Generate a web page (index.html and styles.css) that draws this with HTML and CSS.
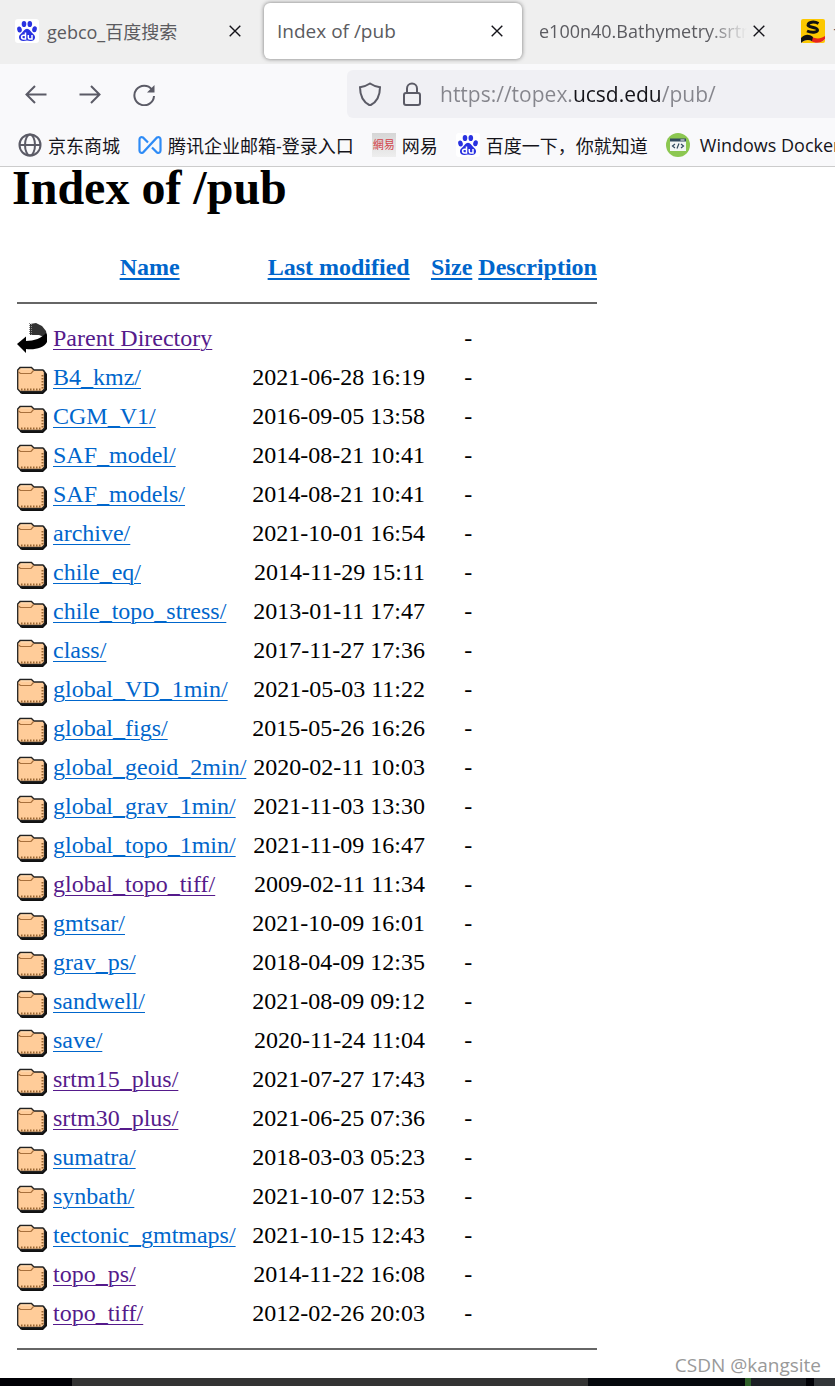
FILE: index.html
```html
<!DOCTYPE html>
<html lang="en">

<head>
    <meta charset="UTF-8">
    <meta name="viewport" content="width=device-width, initial-scale=1.0">
    <title>Index of /pub</title>
    <link rel="stylesheet" href="styles.css">
</head>

<body>
    <!-- shared icons -->
    <svg class="sprite" aria-hidden="true">
        <symbol id="folder" viewBox="0 0 30 33">
            <path d="M3 30 V32 L5 33 H26 L30 29 V13 L27 9z" fill="#111"/>
            <path d="M.7 9 L3 6.500 H14.500 L17 9 H26 L27.500 11 V28 L25 30.500 H3 L.7 28z" fill="#ffcc99" stroke="#222" stroke-width="1.300"/>
            <path d="M1.500 11 L3.500 12.500 H14 L16.500 9.500" fill="none" stroke="#a8703c" stroke-width="1.200"/>
            <path d="M4 8 H14" fill="none" stroke="#ffe0bd"/>
            <path d="M4 28.500 H25" stroke="#9a6633" stroke-width="2" stroke-dasharray="1.500 1.500"/>
            <path d="M25.500 14 V28" stroke="#9a6633" stroke-width="2" stroke-dasharray="1.500 1.500"/>
        </symbol>
        <symbol id="back" viewBox="0 0 30 33">
            <path d="M13 2 L19 1 L25 4 L29 9 L30 14 L27 15 L22 13 L13 13z" fill="#333"/>
            <path d="M12.500 1 V13 M14.500 2 V13" stroke="#888" stroke-dasharray="1 1"/>
            <path d="M0 22 L9 14.500 V19 C17 19 25 16 29 11 L30 13 V20 C27 26 18 28 9 27 V31z" fill="#000"/>
        </symbol>
        <symbol id="baidu" viewBox="0 0 24 24">
            <rect width="24" height="24" rx="3" fill="#fff"/>
            <g fill="#2932e1">
                <ellipse cx="4.500" cy="10.500" rx="2.300" ry="3" transform="rotate(-12 4.500 10.500)"/>
                <ellipse cx="9" cy="5" rx="2.300" ry="3.100"/>
                <ellipse cx="14.800" cy="5" rx="2.300" ry="3.100"/>
                <ellipse cx="19.500" cy="10.300" rx="2.300" ry="3" transform="rotate(12 19.500 10.300)"/>
                <path d="M12 9.800c2.500 0 3.500 2.500 5 4 1.700 1.600 3.300 2.800 3 5-.3 2.500-2.300 3.300-4.500 3.200-1.300-.2-2.300-.4-3.500-.4s-2.200.2-3.500.4c-2.200.1-4.200-.7-4.500-3.200-.3-2.200 1.300-3.400 3-5 1.500-1.500 2.500-4 5-4z"/>
            </g>
            <path d="M10.500 13.500v6.500h-2a1.900 1.900 0 0 1 0-3.800h2M13.300 16v2.500c0 1 .5 1.500 1.400 1.500h2.300v-4" fill="none" stroke="#fff" stroke-width="1.500"/>
        </symbol>
        <symbol id="close" viewBox="0 0 12 12">
            <path d="M.7.7l10.600 10.600M11.300.7L.7 11.300" fill="none" stroke="#15141a" stroke-width="1.400"/>
        </symbol>
    </svg>

    <header class="browser">
        <div class="tabs">
            <div class="tab">
                <svg class="favicon"><use href="#baidu"/></svg>
                <span class="tab-title">gebco_百度搜索</span>
                <button class="tab-close" aria-label="Close tab"><svg><use href="#close"/></svg></button>
            </div>
            <div class="tab active">
                <span class="tab-title">Index of /pub</span>
                <button class="tab-close" aria-label="Close tab"><svg><use href="#close"/></svg></button>
            </div>
            <div class="tab">
                <span class="tab-title fade">e100n40.Bathymetry.srtm</span>
                <button class="tab-close" aria-label="Close tab"><svg><use href="#close"/></svg></button>
            </div>
            <div class="tab">
                <svg class="favicon" viewBox="0 0 24 24">
                    <rect width="24" height="24" rx="2" fill="#fcc800"/>
                    <path d="M0 24v-4h24c-3 4-9 5-13 2-4-2-8-1-11 2z" fill="#efefef"/>
                    <path d="M11 18c4 2 9 2 13-1v3c-3 4-9 5-14 2z" fill="#e8261c"/>
                    <path d="M0 24v-5c4-4 8-4 12-1l-1 4c-4-2-8-1-11 2z" fill="#111"/>
                    <path d="M17.500 4.500C13 2 7.500 3 7 6c-.5 2.500 9.500 2 9.500 5 0 2.600-6 3-10.500 1" fill="none" stroke="#111" stroke-width="3"/>
                </svg>
                <span class="tab-title">专业</span>
            </div>
        </div>

        <div class="toolbar">
            <button class="nav-button" aria-label="Back">
                <svg viewBox="0 0 24 24"><path d="M22.500 12.500H3M11 4l-8.500 8.500L11 21"/></svg>
            </button>
            <button class="nav-button" aria-label="Forward">
                <svg viewBox="0 0 24 24"><path d="M1.500 12.500H21M13 4l8.500 8.500L13 21"/></svg>
            </button>
            <button class="nav-button" aria-label="Reload">
                <svg viewBox="0 0 24 24"><path d="M20 7.500A9.800 9.800 0 1 0 22 14"/><path class="solid" d="M22.500 3v7.500H15z"/></svg>
            </button>
            <div class="url-bar">
                <svg class="url-icon" viewBox="0 0 24 24"><path d="M12 1.500c3 2 6 3.200 10 3.700 0 9-2.500 14.500-10 18.300C4.500 19.700 2 14.200 2 5.200c4-.5 7-1.700 10-3.700z"/></svg>
                <svg class="url-icon" viewBox="0 0 24 24"><rect x="4" y="11" width="16" height="12" rx="2"/><path d="M7 11V6.500a5 5 0 0 1 10 0V11"/></svg>
                <input class="url-input" type="text" aria-label="Address" value="https://topex.ucsd.edu/pub/">
            </div>
        </div>

        <nav class="bookmarks">
            <a class="bookmark" href="#">
                <svg class="favicon globe" viewBox="0 0 24 24"><circle cx="12" cy="12" r="10.500"/><ellipse cx="12" cy="12" rx="5" ry="10.500"/><path d="M1.500 12h21"/></svg>
                京东商城
            </a>
            <a class="bookmark" href="#">
                <svg class="favicon" viewBox="0 0 24 24"><path d="M14 14.500l5 5c2 1 3.500 0 3.500-2v-11c0-2-1.500-3-3.500-2L5 19.500c-2 1-3.500 0-3.500-2v-11c0-2 1.500-3 3.500-2l5 5" fill="none" stroke="#2e8bf6" stroke-width="2.200"/></svg>
                腾讯企业邮箱-登录入口
            </a>
            <a class="bookmark" href="#">
                <span class="netease">網易</span>
                网易
            </a>
            <a class="bookmark" href="#">
                <svg class="favicon"><use href="#baidu"/></svg>
                百度一下，你就知道
            </a>
            <a class="bookmark docker" href="#">
                <svg class="favicon" viewBox="0 0 24 24">
                    <circle cx="12" cy="12" r="12" fill="#8cc751"/>
                    <path d="M4 6h16v12H4z" fill="#f2f5f5"/>
                    <path d="M4 5.500h16v3H4z" fill="#324a5e"/>
                    <path d="M14.500 7h4" stroke="#fff"/>
                    <path d="M9 11l-2.500 2L9 15M15 11l2.500 2-2.500 2M13 10.500l-2 5" fill="none" stroke="#324a5e" stroke-width="1.200"/>
                </svg>
                Windows Docker
            </a>
        </nav>
    </header>

    <main>
        <h1>Index of /pub</h1>
        <table>
            <tr><th><span class="icon"></span></th><th><a href="#">Name</a></th><th><a href="#">Last modified</a></th><th><a href="#">Size</a></th><th><a href="#">Description</a></th></tr>
            <tr><td colspan="5"><hr></td></tr>
            <tr><td><svg class="icon"><use href="#back"/></svg></td><td><a class="visited" href="#">Parent Directory</a></td><td></td><td>-</td><td></td></tr>
            <tr><td><svg class="icon"><use href="#folder"/></svg></td><td><a href="#">B4_kmz/</a></td><td>2021-06-28 16:19</td><td>-</td><td></td></tr>
            <tr><td><svg class="icon"><use href="#folder"/></svg></td><td><a href="#">CGM_V1/</a></td><td>2016-09-05 13:58</td><td>-</td><td></td></tr>
            <tr><td><svg class="icon"><use href="#folder"/></svg></td><td><a href="#">SAF_model/</a></td><td>2014-08-21 10:41</td><td>-</td><td></td></tr>
            <tr><td><svg class="icon"><use href="#folder"/></svg></td><td><a href="#">SAF_models/</a></td><td>2014-08-21 10:41</td><td>-</td><td></td></tr>
            <tr><td><svg class="icon"><use href="#folder"/></svg></td><td><a href="#">archive/</a></td><td>2021-10-01 16:54</td><td>-</td><td></td></tr>
            <tr><td><svg class="icon"><use href="#folder"/></svg></td><td><a href="#">chile_eq/</a></td><td>2014-11-29 15:11</td><td>-</td><td></td></tr>
            <tr><td><svg class="icon"><use href="#folder"/></svg></td><td><a href="#">chile_topo_stress/</a></td><td>2013-01-11 17:47</td><td>-</td><td></td></tr>
            <tr><td><svg class="icon"><use href="#folder"/></svg></td><td><a href="#">class/</a></td><td>2017-11-27 17:36</td><td>-</td><td></td></tr>
            <tr><td><svg class="icon"><use href="#folder"/></svg></td><td><a href="#">global_VD_1min/</a></td><td>2021-05-03 11:22</td><td>-</td><td></td></tr>
            <tr><td><svg class="icon"><use href="#folder"/></svg></td><td><a href="#">global_figs/</a></td><td>2015-05-26 16:26</td><td>-</td><td></td></tr>
            <tr><td><svg class="icon"><use href="#folder"/></svg></td><td><a href="#">global_geoid_2min/</a></td><td>2020-02-11 10:03</td><td>-</td><td></td></tr>
            <tr><td><svg class="icon"><use href="#folder"/></svg></td><td><a href="#">global_grav_1min/</a></td><td>2021-11-03 13:30</td><td>-</td><td></td></tr>
            <tr><td><svg class="icon"><use href="#folder"/></svg></td><td><a href="#">global_topo_1min/</a></td><td>2021-11-09 16:47</td><td>-</td><td></td></tr>
            <tr><td><svg class="icon"><use href="#folder"/></svg></td><td><a class="visited" href="#">global_topo_tiff/</a></td><td>2009-02-11 11:34</td><td>-</td><td></td></tr>
            <tr><td><svg class="icon"><use href="#folder"/></svg></td><td><a href="#">gmtsar/</a></td><td>2021-10-09 16:01</td><td>-</td><td></td></tr>
            <tr><td><svg class="icon"><use href="#folder"/></svg></td><td><a href="#">grav_ps/</a></td><td>2018-04-09 12:35</td><td>-</td><td></td></tr>
            <tr><td><svg class="icon"><use href="#folder"/></svg></td><td><a href="#">sandwell/</a></td><td>2021-08-09 09:12</td><td>-</td><td></td></tr>
            <tr><td><svg class="icon"><use href="#folder"/></svg></td><td><a href="#">save/</a></td><td>2020-11-24 11:04</td><td>-</td><td></td></tr>
            <tr><td><svg class="icon"><use href="#folder"/></svg></td><td><a class="visited" href="#">srtm15_plus/</a></td><td>2021-07-27 17:43</td><td>-</td><td></td></tr>
            <tr><td><svg class="icon"><use href="#folder"/></svg></td><td><a class="visited" href="#">srtm30_plus/</a></td><td>2021-06-25 07:36</td><td>-</td><td></td></tr>
            <tr><td><svg class="icon"><use href="#folder"/></svg></td><td><a href="#">sumatra/</a></td><td>2018-03-03 05:23</td><td>-</td><td></td></tr>
            <tr><td><svg class="icon"><use href="#folder"/></svg></td><td><a href="#">synbath/</a></td><td>2021-10-07 12:53</td><td>-</td><td></td></tr>
            <tr><td><svg class="icon"><use href="#folder"/></svg></td><td><a href="#">tectonic_gmtmaps/</a></td><td>2021-10-15 12:43</td><td>-</td><td></td></tr>
            <tr><td><svg class="icon"><use href="#folder"/></svg></td><td><a class="visited" href="#">topo_ps/</a></td><td>2014-11-22 16:08</td><td>-</td><td></td></tr>
            <tr><td><svg class="icon"><use href="#folder"/></svg></td><td><a class="visited" href="#">topo_tiff/</a></td><td>2012-02-26 20:03</td><td>-</td><td></td></tr>
            <tr><td colspan="5"><hr></td></tr>
        </table>
        <div class="watermark">CSDN @kangsite</div>
    </main>

    <footer class="taskbar">
        <span class="start"></span>
        <span class="search"></span>
        <span class="apps"></span>
        <span class="green"></span>
        <span class="tray"></span>
        <span class="gap"></span>
        <span class="end"></span>
    </footer>
</body>

</html>
```

FILE: styles.css
```css
* {
    box-sizing: border-box;
}

body {
    margin: 0;
    background: #fff;
    color: #000;
    font-family: 'Liberation Serif', 'Times New Roman', serif;
    font-size: 24px;
    overflow-x: hidden;
}

button {
    padding: 0;
    border: none;
    background: none;
}

.sprite {
    position: absolute;
    width: 0;
    height: 0;
}

/* browser chrome */
.browser {
    font-family: 'Open Sans', 'Noto Sans CJK SC', sans-serif;
    font-size: 18px;
    background: #f9f9fb;
    border-bottom: 1px solid #ccc;
    overflow: hidden;
}

.favicon {
    width: 24px;
    height: 24px;
    flex: none;
}

.tabs {
    display: flex;
    gap: 4px;
    height: 64px;
    padding: 3px 2px 5px;
    background: #efefef;
}

.tab {
    display: flex;
    align-items: center;
    flex: none;
    width: 258px;
    padding: 0 13px;
    color: #5b5b60;
    border-radius: 6px;
}

.tab.active {
    background: #fff;
    box-shadow: 0 0 4px rgba(0, 0, 0, 0.5);
}

.tab.active .tab-title {
    font-size: 19px;
}

.tab .favicon {
    margin-right: 8px;
}

.tab-title {
    flex: 1;
    overflow: hidden;
    white-space: nowrap;
}

.fade {
    mask-image: linear-gradient(to left, transparent, #000 40px);
}

.tab-close {
    width: 24px;
    height: 24px;
    display: flex;
    align-items: center;
    justify-content: center;
}

.tab-close svg {
    width: 12px;
    height: 12px;
}

.toolbar {
    display: flex;
    align-items: center;
    height: 60px;
    padding-left: 24px;
}

.nav-button {
    width: 24px;
    height: 24px;
    margin-right: 30px;
}

.nav-button svg,
.url-icon {
    width: 24px;
    height: 24px;
    fill: none;
    stroke: #5b5b66;
    stroke-width: 2;
    display: block;
    flex: none;
}

.nav-button .solid {
    fill: #5b5b66;
    stroke: none;
}

.url-bar {
    display: flex;
    align-items: center;
    flex: 1;
    height: 48px;
    margin-left: 161px;
    padding-left: 11px;
    background: #f0f0f4;
    border-radius: 6px 0 0 6px;
}

.url-icon {
    margin-right: 18px;
}

/* only the domain part of the address is dark */
.url-input {
    flex: 1;
    min-width: 0;
    padding: 0;
    margin-left: -2px;
    border: none;
    outline: none;
    font-family: inherit;
    font-size: 21px;
    color: transparent;
    background: linear-gradient(to right, #85858c 133px, #15141a 133px, #15141a 221px, #85858c 221px);
    background-clip: text;
    -webkit-background-clip: text;
}

.bookmarks {
    display: flex;
    align-items: center;
    gap: 18px;
    height: 42px;
    padding-left: 18px;
}

.bookmark {
    display: flex;
    align-items: center;
    gap: 6px;
    flex: none;
    color: #15141a;
    text-decoration: none;
    white-space: nowrap;
}

.bookmark.docker {
    gap: 10px;
}

.globe {
    fill: none;
    stroke: #5b5b66;
    stroke-width: 2;
}

.netease {
    width: 24px;
    height: 24px;
    line-height: 24px;
    background: linear-gradient(#d6d6d6, #eee);
    color: #d2434a;
    font-size: 11px;
    text-align: center;
}

/* directory listing */
main {
    position: relative;
    padding: 0 12px 11px;
}

h1 {
    margin: 0 0 38px;
    font-size: 48px;
    line-height: 41px;
}

table {
    border-spacing: 4px;
    line-height: 27px;
}

th,
td {
    padding: 1px;
    white-space: nowrap;
}

td:nth-child(3),
td:nth-child(4) {
    text-align: right;
}

.icon {
    display: block;
    width: 30px;
    height: 33px;
}

hr {
    height: 2px;
    margin: 12px 0;
    border: none;
    background: #666;
}

main a {
    color: #0066cc;
    text-decoration-thickness: 1px;
    text-underline-offset: 3px;
}

main th a {
    text-decoration-thickness: 2px;
}

main a.visited {
    color: #551a8b;
}

.watermark {
    position: absolute;
    right: 14px;
    bottom: 0;
    font-family: 'Open Sans', sans-serif;
    font-size: 19px;
    color: #999;
}

.taskbar {
    display: flex;
    height: 8px;
    background: #05080d;
}

.start {
    width: 72px;
    background: #000005;
}

.search {
    width: 516px;
    background: #333;
}

.apps {
    flex: 1;
}

.green {
    width: 6px;
    background: #2f6029;
}

.tray {
    width: 55px;
    background: #1c1f24;
}

.gap {
    width: 8px;
    background: #000005;
}

.end {
    width: 21px;
    background: #333639;
}
```
